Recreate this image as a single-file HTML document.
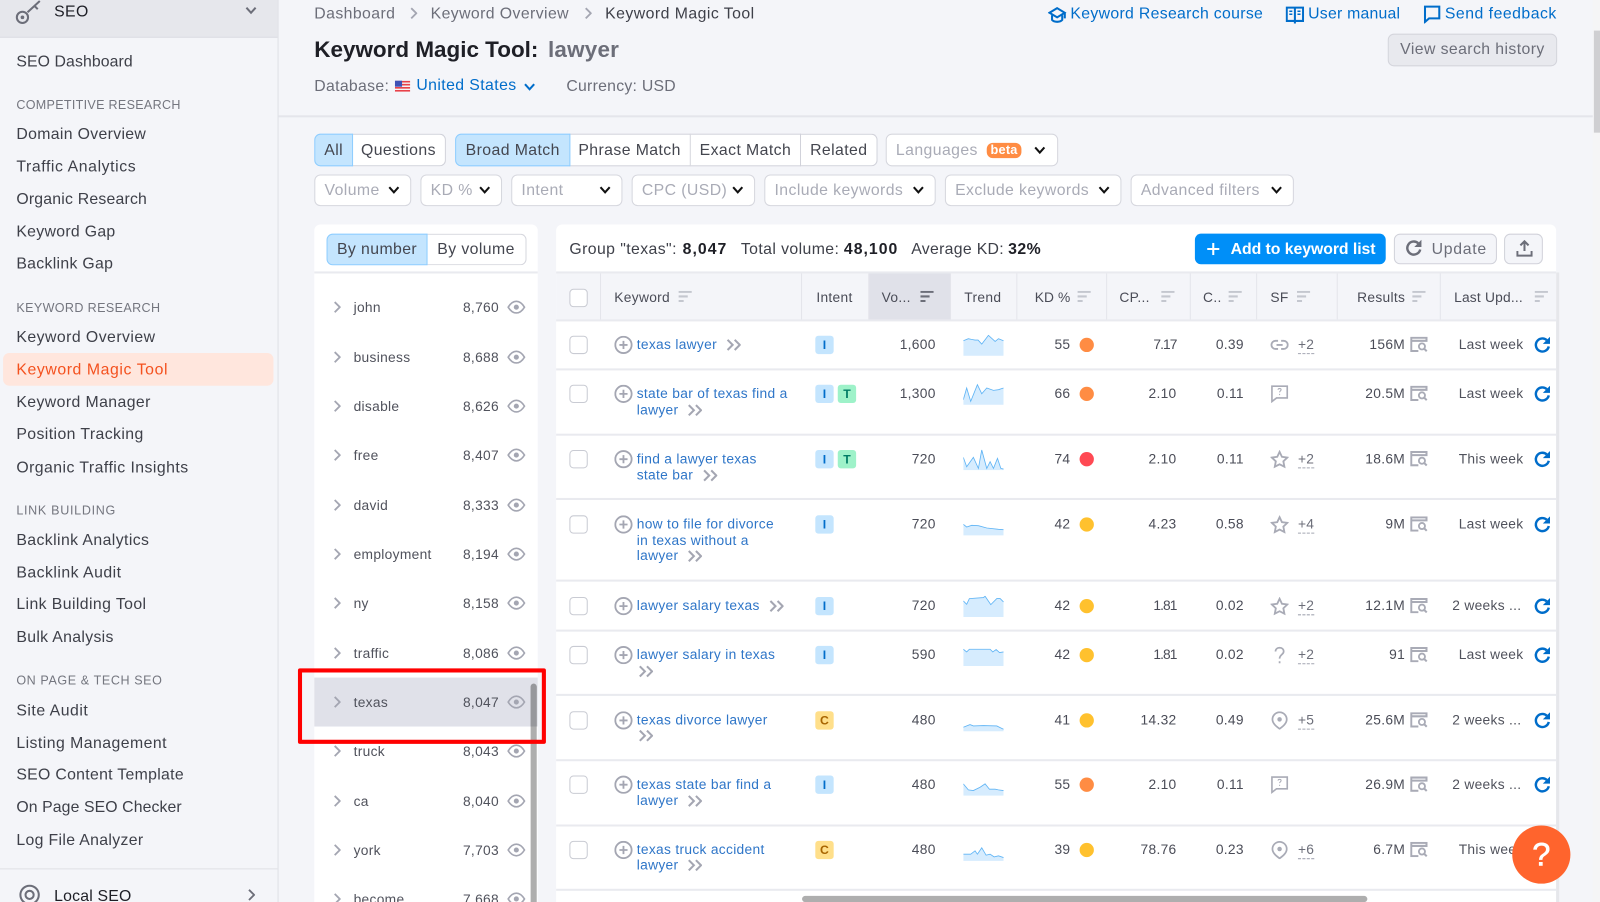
<!DOCTYPE html>
<html><head><meta charset="utf-8"><title>Keyword Magic Tool</title>
<style>
html,body{margin:0;padding:0;width:1600px;height:902px;overflow:hidden;background:#f4f5f9}
#w{position:absolute;left:0;top:0;width:1568px;height:884px;overflow:hidden;transform:scale(1.020408);transform-origin:0 0;font-family:"Liberation Sans",sans-serif;font-size:15.5px;letter-spacing:.4px;color:#44464f;background:#f4f5f9;filter:blur(.3px)}
#w div,#w svg{position:absolute}
#w svg.i{position:static;display:inline-block}
.t{white-space:nowrap;transform:translateY(-50%);line-height:18px}
.s{left:16px;color:#3e4049}
.h{left:16px;font-size:12.3px;letter-spacing:.3px;color:#74767f}
.b{color:#006dca}
.g{color:#6c6e79}
.seg{top:131px;height:30px;background:#fff;border:1px solid #d1d2da;line-height:32px;text-align:center;color:#44464f;box-sizing:content-box}
.on{background:#c4e5fe;border-color:#8ecdff;z-index:2}
.f{top:171px;height:29px;background:#fff;border:1px solid #d6d7de;border-radius:6px;line-height:30px;color:#a9abb6;padding-left:9px;box-sizing:content-box}
.f svg{right:10px;top:10px;width:12px;height:9px;color:#111}
.lr{left:308px;width:219px;height:0;font-size:13.5px;letter-spacing:.3px;color:#50525c}
.lr .c{left:19px;top:-6px;width:7px;height:12px;color:#a4a6b2}
.lr .l{left:38.500px;top:1px}
.lr .n{right:38px;top:1px}
.lr .e{left:189px;top:-7px;width:18px;height:14px;color:#a4a6b2}
.hd{top:292px;font-size:13.5px;letter-spacing:.3px;color:#4a4c57}
.so{top:285px;width:13px;height:11px;color:#c4c7cf}
.vl{top:268px;width:1px;height:46px;background:#e4e5eb}
.hl{left:545px;width:980px;height:2px;background:#e9eaef}
.r{left:545px;width:980px;height:0;font-size:13.5px;letter-spacing:.3px;color:#4a4c57}
.ck{left:13px;top:-9px;width:16px;height:16px;border:1px solid #c9cbd3;border-radius:4px;background:#fff}
.pl{left:57px;top:-9px;width:18px;height:18px;color:#a4a6b2}
.kw{left:79px;top:-8px;line-height:15.6px;color:#2f76c8;white-space:nowrap}
.dc{width:14px;height:12px;margin-left:9.500px;vertical-align:-2px;color:#a4a6b2}
.bd{top:-9px;width:18px;height:18px;border-radius:3px;font-size:12px;font-weight:bold;letter-spacing:0;line-height:18px;text-align:center}
.I{left:254px;background:#c4e5fe;color:#006dca}
.T{left:276px;background:#9ef2c9;color:#007c65}
.C{left:254px;background:#ffdf8a;color:#a86400}
.vol{right:608px}
.tr{left:399px;top:-10px;width:39.5px;height:21px}
.kd{right:476px}
.dot{left:513px;top:-7px;width:14px;height:14px;border-radius:50%}
.o{background:#ff8c43}.y{background:#ffc12e}.d{background:#ff4953}
.cpc{right:372px}
.com{right:306px}
.sf{left:700px;top:-9px;width:18px;height:18px;color:#a9abb6}
.mo{left:727px;border-bottom:1px dashed #a4a6b2;line-height:15px;color:#6c6e79;padding-bottom:1px;transform:translateY(-47%)}
.res{right:148px}
.ri{left:837px;top:-8px;width:17px;height:15px;color:#a9abb6}
.up{right:32px;color:#50525c}
.u2{right:34px}
.rf{left:958px;top:-8px;width:17px;height:17px;color:#006dca}
.nr{letter-spacing:-.9px}
</style></head><body>
<svg width="0" height="0" style="position:absolute">
<symbol id="ch" viewBox="0 0 12 9"><path d="M1.500 1.500L6 6.500l4.500-5" fill="none" stroke="currentColor" stroke-width="2"/></symbol>
<symbol id="cr" viewBox="0 0 7 12"><path d="M1 1l5 5-5 5" fill="none" stroke="currentColor" stroke-width="1.800"/></symbol>
<symbol id="eye" viewBox="0 0 18 14"><path d="M1 7c2.500-4 5-5.700 8-5.700S14.500 3 17 7c-2.500 4-5 5.700-8 5.700S3.500 11 1 7z" fill="none" stroke="currentColor" stroke-width="1.600"/><circle cx="9" cy="7" r="2.500" fill="currentColor"/></symbol>
<symbol id="sort" viewBox="0 0 13 11"><path d="M0 1h13M0 5.500h9M0 10h5" stroke="currentColor" stroke-width="2" fill="none"/></symbol>
<symbol id="dc" viewBox="0 0 14 12"><path d="M1 1l5 5-5 5M8 1l5 5-5 5" fill="none" stroke="currentColor" stroke-width="2"/></symbol>
<symbol id="pl" viewBox="0 0 18 18"><circle cx="9" cy="9" r="8" fill="none" stroke="currentColor" stroke-width="1.800"/><path d="M9 5v8M5 9h8" stroke="currentColor" stroke-width="1.800"/></symbol>
<symbol id="lk" viewBox="0 0 18 18"><path d="M7.500 5H5a4 4 0 0 0 0 8h2.500M10.500 5H13a4 4 0 0 1 0 8h-2.500M6 9h6" fill="none" stroke="currentColor" stroke-width="1.800"/></symbol>
<symbol id="cq" viewBox="0 0 18 18"><path d="M1.500 1.500h15v11.500H6L1.500 16.500z" fill="none" stroke="currentColor" stroke-width="1.600"/><path d="M7.500 5c0-1.600 3-1.600 3 0 0 1-1.500 1.200-1.500 2.500M9 9v1.200" fill="none" stroke="currentColor" stroke-width="1"/></symbol>
<symbol id="st" viewBox="0 0 18 18"><path d="M9 1.800l2.300 4.900 5.300.7-3.900 3.700 1 5.300L9 14l-4.700 2.400 1-5.300-3.900-3.700 5.300-.7z" fill="none" stroke="currentColor" stroke-width="1.800"/></symbol>
<symbol id="pn" viewBox="0 0 18 18"><path d="M9 1a7 7 0 0 0-7 7c0 4 4 7 7 9.200 3-2.200 7-5.200 7-9.200a7 7 0 0 0-7-7z" fill="none" stroke="currentColor" stroke-width="1.700"/><circle cx="9" cy="8" r="2.200" fill="currentColor"/></symbol>
<symbol id="qm" viewBox="0 0 18 18"><path d="M5 5.500c0-5 8-5 8 0 0 3-4 3-4 7M9 15v2" fill="none" stroke="currentColor" stroke-width="1.700"/></symbol>
<symbol id="rs" viewBox="0 0 17 15"><path d="M1 4h15V1H1v13h7" fill="none" stroke="currentColor" stroke-width="2"/><circle cx="11.500" cy="9.500" r="3" fill="none" stroke="currentColor" stroke-width="1.800"/><path d="M13.700 11.700l2.500 2.500" stroke="currentColor" stroke-width="2"/></symbol>
<symbol id="rf" viewBox="0 0 17 17"><path d="M14.800 9.500a6.400 6.400 0 1 1-2-6.200" fill="none" stroke="currentColor" stroke-width="2.400"/><path d="M16 0v7H9z" fill="currentColor"/></symbol>
</svg>
<div id="w">

<!-- sidebar -->
<div style="left:0;top:0;width:272px;height:884px;background:#f4f5f9;border-right:1px solid #dfe0e6"></div>
<div style="left:0;top:0;width:272px;height:36px;background:#e6e7ec;border-bottom:1px solid #dcdde3"></div>
<svg style="left:15px;top:0;width:28px;height:24px" viewBox="0 0 28 24"><circle cx="7" cy="17" r="5.500" fill="none" stroke="#6c6e79" stroke-width="2"/><circle cx="7" cy="17" r="1.800" fill="#6c6e79"/><path d="M12 12L24 1M19 6l3 3" fill="none" stroke="#6c6e79" stroke-width="2"/></svg>
<div class="t" style="left:53px;top:12px;color:#1e1f26">SEO</div>
<svg style="left:240px;top:6px;width:12px;height:9px;color:#6c6e79"><use href="#ch"/></svg>
<div class="t s" style="top:61px;letter-spacing:.1px">SEO Dashboard</div>
<div class="t h" style="top:103px">COMPETITIVE RESEARCH</div>
<div class="t s" style="top:132px;letter-spacing:.33px">Domain Overview</div>
<div class="t s" style="top:164px;letter-spacing:.58px">Traffic Analytics</div>
<div class="t s" style="top:196px;letter-spacing:.2px">Organic Research</div>
<div class="t s" style="top:228px;letter-spacing:.3px">Keyword Gap</div>
<div class="t s" style="top:259px;letter-spacing:.3px">Backlink Gap</div>
<div class="t h" style="top:302px;letter-spacing:.37px">KEYWORD RESEARCH</div>
<div class="t s" style="top:331px;letter-spacing:.45px">Keyword Overview</div>
<div style="left:3px;top:346px;width:265px;height:32px;background:#ffe6dd;border-radius:6px"></div>
<div class="t s" style="top:363px;color:#f4511e;letter-spacing:.57px">Keyword Magic Tool</div>
<div class="t s" style="top:395px">Keyword Manager</div>
<div class="t s" style="top:426px">Position Tracking</div>
<div class="t s" style="top:459px;letter-spacing:.44px">Organic Traffic Insights</div>
<div class="t h" style="top:500px;letter-spacing:.68px">LINK BUILDING</div>
<div class="t s" style="top:530px">Backlink Analytics</div>
<div class="t s" style="top:562px;letter-spacing:.47px">Backlink Audit</div>
<div class="t s" style="top:593px">Link Building Tool</div>
<div class="t s" style="top:625px;letter-spacing:.32px">Bulk Analysis</div>
<div class="t h" style="top:667px;letter-spacing:.58px">ON PAGE &amp; TECH SEO</div>
<div class="t s" style="top:697px;letter-spacing:.5px">Site Audit</div>
<div class="t s" style="top:729px;letter-spacing:.45px">Listing Management</div>
<div class="t s" style="top:760px;letter-spacing:.3px">SEO Content Template</div>
<div class="t s" style="top:792px;letter-spacing:.1px">On Page SEO Checker</div>
<div class="t s" style="top:824px;letter-spacing:.34px">Log File Analyzer</div>
<div style="left:0;top:851px;width:272px;height:1px;background:#dfe0e6"></div>
<svg style="left:18px;top:866px;width:22px;height:22px" viewBox="0 0 22 22"><circle cx="11" cy="11" r="9" fill="none" stroke="#6c6e79" stroke-width="2"/><circle cx="11" cy="11" r="4" fill="none" stroke="#6c6e79" stroke-width="2"/></svg>
<div class="t" style="left:53px;top:879px;color:#1e1f26;letter-spacing:.2px">Local SEO</div>
<svg style="left:243px;top:871px;width:7px;height:12px;color:#6c6e79"><use href="#cr"/></svg>

<!-- header -->
<div class="t g" style="left:308px;top:14px">Dashboard</div>
<svg style="left:402px;top:7px;width:7px;height:12px;color:#a4a6b2"><use href="#cr"/></svg>
<div class="t g" style="left:422px;top:14px">Keyword Overview</div>
<svg style="left:573px;top:7px;width:7px;height:12px;color:#a4a6b2"><use href="#cr"/></svg>
<div class="t" style="left:593px;top:14px;color:#3e4049;letter-spacing:.45px">Keyword Magic Tool</div>
<div class="t" style="left:308px;top:49px;font-size:22px;font-weight:bold;letter-spacing:0;color:#1e1f26;line-height:26px">Keyword Magic Tool:</div>
<div class="t g" style="left:537px;top:49px;font-size:22px;font-weight:bold;letter-spacing:.2px;line-height:26px">lawyer</div>
<div class="t g" style="left:308px;top:85px;letter-spacing:.3px">Database:</div>
<svg style="left:387px;top:79px;width:15px;height:11px" viewBox="0 0 15 11"><rect width="15" height="11" fill="#f5f5f5"/><path d="M0 1h15M0 4h15M0 7h15M0 10h15" stroke="#e8424a" stroke-width="1.600"/><rect width="7" height="6" fill="#3f51b5"/></svg>
<div class="t b" style="left:408px;top:84px">United States</div>
<svg style="left:513px;top:81px;width:12px;height:9px;color:#006dca"><use href="#ch"/></svg>
<div class="t g" style="left:555px;top:85px;letter-spacing:.25px">Currency: USD</div>

<svg style="left:1027px;top:6px;width:18px;height:18px;color:#006dca" viewBox="0 0 18 18"><path d="M9 2L1.500 6.500 9 11l7.500-4.500zM4 9v4.500c2 2.500 8 2.500 10 0V9M16.500 6.500V12" fill="none" stroke="currentColor" stroke-width="2"/></svg>
<div class="t b" style="left:1049px;top:14px;letter-spacing:.31px">Keyword Research course</div>
<svg style="left:1260px;top:6px;width:18px;height:18px;color:#006dca" viewBox="0 0 18 18"><path d="M1 1.500h16v13H1zM9 1.500V17" fill="none" stroke="currentColor" stroke-width="2"/><path d="M3.500 5h3M3.500 8h3M11.500 5h3M11.500 8h3" stroke="currentColor" stroke-width="1.500"/></svg>
<div class="t b" style="left:1282px;top:14px;letter-spacing:.22px">User manual</div>
<svg style="left:1395px;top:5px;width:17px;height:18px;color:#006dca" viewBox="0 0 17 18"><path d="M1.500 1.500h14v11.500H5.500l-4 3.500z" fill="none" stroke="currentColor" stroke-width="2"/></svg>
<div class="t b" style="left:1416px;top:14px;letter-spacing:.48px">Send feedback</div>
<div style="left:1360px;top:33px;width:164px;height:30px;background:#e8e9ee;border:1px solid #d4d5dc;border-radius:6px;line-height:29px;text-align:center;color:#6c6e79">View search history</div>

<div style="left:273px;top:113px;width:1288px;height:2px;background:#e4e5eb"></div>
<div style="left:1561px;top:0;width:7px;height:884px;background:#f5f5f6"></div>
<div style="left:1562px;top:30px;width:6px;height:100px;background:#cfcfd2"></div>

<!-- tabs -->
<div class="seg on" style="left:308px;width:36px;border-radius:6px 0 0 6px">All</div>
<div class="seg" style="left:345px;width:91px;border-left:0;border-radius:0 6px 6px 0">Questions</div>
<div class="seg on" style="left:446px;width:111px;border-radius:6px 0 0 6px">Broad Match</div>
<div class="seg" style="left:558px;width:118px;border-left:0">Phrase Match</div>
<div class="seg" style="left:677px;width:107px;border-left:0">Exact Match</div>
<div class="seg" style="left:785px;width:74px;border-left:0;border-radius:0 6px 6px 0">Related</div>
<div class="f" style="left:868px;top:131px;height:30px;width:158px;line-height:31px">Languages<svg style="right:11px;top:11px"><use href="#ch"/></svg></div>
<div style="left:967px;top:140px;width:34px;height:15px;background:#ff8c43;border-radius:6px;color:#fff;font-size:12.5px;font-weight:bold;letter-spacing:.2px;line-height:15px;text-align:center">beta</div>

<div class="f" style="left:308px;width:84px">Volume<svg><use href="#ch"/></svg></div>
<div class="f" style="left:412px;width:69px">KD %<svg><use href="#ch"/></svg></div>
<div class="f" style="left:501px;width:98px">Intent<svg><use href="#ch"/></svg></div>
<div class="f" style="left:619px;width:110px">CPC (USD)<svg><use href="#ch"/></svg></div>
<div class="f" style="left:749px;width:157px">Include keywords<svg><use href="#ch"/></svg></div>
<div class="f" style="left:926px;width:162px">Exclude keywords<svg><use href="#ch"/></svg></div>
<div class="f" style="left:1108px;width:149px">Advanced filters<svg><use href="#ch"/></svg></div>

<!-- left panel -->
<div style="left:308px;top:220px;width:219px;height:664px;background:#fff;border-radius:6px 6px 0 0"></div>
<div style="left:320px;top:229px;width:97px;height:29px;background:#c4e5fe;border:1px solid #8ecdff;border-radius:6px 0 0 6px;line-height:30px;text-align:center;z-index:2">By number</div>
<div style="left:418px;top:229px;width:97px;height:29px;background:#fff;border:1px solid #d6d7de;border-left:0;border-radius:0 6px 6px 0;line-height:30px;text-align:center">By volume</div>
<div style="left:308px;top:266px;width:219px;height:2px;background:#e9eaef"></div>

<div style="left:308px;top:664px;width:219px;height:48px;background:#e0e1e9"></div>
<div style="left:520px;top:670px;width:6px;height:214px;background:#aeaeae;border-radius:3px 3px 0 0"></div>
<div style="left:520px;top:670px;width:6px;height:42px;background:#97989c;border-radius:3px 3px 0 0"></div>

<div class="lr" style="top:301px"><svg class="c"><use href="#cr"/></svg><div class="t l">john</div><div class="t n">8,760</div><svg class="e"><use href="#eye"/></svg></div>
<div class="lr" style="top:349.500px"><svg class="c"><use href="#cr"/></svg><div class="t l">business</div><div class="t n">8,688</div><svg class="e"><use href="#eye"/></svg></div>
<div class="lr" style="top:398px"><svg class="c"><use href="#cr"/></svg><div class="t l">disable</div><div class="t n">8,626</div><svg class="e"><use href="#eye"/></svg></div>
<div class="lr" style="top:446px"><svg class="c"><use href="#cr"/></svg><div class="t l">free</div><div class="t n">8,407</div><svg class="e"><use href="#eye"/></svg></div>
<div class="lr" style="top:494.500px"><svg class="c"><use href="#cr"/></svg><div class="t l">david</div><div class="t n">8,333</div><svg class="e"><use href="#eye"/></svg></div>
<div class="lr" style="top:543px"><svg class="c"><use href="#cr"/></svg><div class="t l">employment</div><div class="t n">8,194</div><svg class="e"><use href="#eye"/></svg></div>
<div class="lr" style="top:591px"><svg class="c"><use href="#cr"/></svg><div class="t l">ny</div><div class="t n">8,158</div><svg class="e"><use href="#eye"/></svg></div>
<div class="lr" style="top:639.500px"><svg class="c"><use href="#cr"/></svg><div class="t l">traffic</div><div class="t n">8,086</div><svg class="e"><use href="#eye"/></svg></div>
<div class="lr" style="top:688px"><svg class="c"><use href="#cr"/></svg><div class="t l">texas</div><div class="t n">8,047</div><svg class="e"><use href="#eye"/></svg></div>
<div class="lr" style="top:736px"><svg class="c"><use href="#cr"/></svg><div class="t l">truck</div><div class="t n">8,043</div><svg class="e"><use href="#eye"/></svg></div>
<div class="lr" style="top:784.500px"><svg class="c"><use href="#cr"/></svg><div class="t l">ca</div><div class="t n">8,040</div><svg class="e"><use href="#eye"/></svg></div>
<div class="lr" style="top:832.500px"><svg class="c"><use href="#cr"/></svg><div class="t l">york</div><div class="t n">7,703</div><svg class="e"><use href="#eye"/></svg></div>
<div class="lr" style="top:880.500px"><svg class="c"><use href="#cr"/></svg><div class="t l">become</div><div class="t n">7,668</div><svg class="e"><use href="#eye"/></svg></div>

<div style="left:292px;top:655px;width:235px;height:66px;border:4px solid #f00;border-radius:2px;z-index:5"></div>

<!-- right card -->
<div style="left:545px;top:220px;width:980px;height:664px;background:#fff;border-radius:6px 6px 0 0"></div>
<div style="left:1525px;top:267px;width:3px;height:617px;background:#e6e7eb"></div>
<div class="t" style="left:558px;top:245px;color:#3e4049">Group "texas":</div>
<div class="t" style="left:669px;top:245px;font-weight:bold;color:#1e1f26;letter-spacing:1px">8,047</div>
<div class="t" style="left:726px;top:245px;color:#3e4049">Total volume:</div>
<div class="t" style="left:827px;top:245px;font-weight:bold;color:#1e1f26;letter-spacing:1px">48,100</div>
<div class="t" style="left:893px;top:245px;color:#3e4049;letter-spacing:.3px">Average KD:</div>
<div class="t" style="left:988px;top:245px;font-weight:bold;color:#1e1f26">32%</div>

<div style="left:1171px;top:229px;width:187px;height:30px;background:#008ff8;border-radius:6px"></div>
<svg style="left:1183px;top:238px;width:12px;height:12px" viewBox="0 0 12 12"><path d="M6 0v12M0 6h12" stroke="#fff" stroke-width="2"/></svg>
<div class="t" style="left:1206px;top:245px;color:#fff;font-weight:bold;letter-spacing:-.05px">Add to keyword list</div>
<div style="left:1366px;top:229px;width:99px;height:28px;background:#f4f5f9;border:1px solid #d1d2da;border-radius:6px"></div>
<svg style="left:1377px;top:235px;width:17px;height:17px;color:#6c6e79"><use href="#rf"/></svg>
<div class="t g" style="left:1403px;top:245px;letter-spacing:.7px">Update</div>
<div style="left:1474px;top:229px;width:36px;height:28px;background:#f4f5f9;border:1px solid #d1d2da;border-radius:6px"></div>
<svg style="left:1486px;top:235px;width:16px;height:17px" viewBox="0 0 16 17"><path d="M8 11V2M4 5.500L8 1.500l4 4M1 11v4.500h14V11" fill="none" stroke="#6c6e79" stroke-width="2"/></svg>

<!-- table head -->
<div style="left:545px;top:267px;width:980px;height:47px;background:#f4f5f9"></div>
<div style="left:545px;top:266px;width:980px;height:2px;background:#e9eaef"></div>
<div style="left:851px;top:268px;width:80px;height:46px;background:#e0e1e9"></div>
<div class="vl" style="left:588px"></div><div class="vl" style="left:785px"></div><div class="vl" style="left:851px"></div><div class="vl" style="left:931px"></div><div class="vl" style="left:996px"></div><div class="vl" style="left:1084px"></div><div class="vl" style="left:1166px"></div><div class="vl" style="left:1231px"></div><div class="vl" style="left:1310px"></div><div class="vl" style="left:1411px"></div>
<div style="left:558px;top:283px;width:16px;height:16px;border:1px solid #c9cbd3;border-radius:4px;background:#fff"></div>
<div class="t hd" style="left:602px">Keyword</div><svg class="so" style="left:665px"><use href="#sort"/></svg>
<div class="t hd" style="left:800px">Intent</div>
<div class="t hd" style="left:864px">Vo...</div><svg class="so" style="left:902px;color:#6c6e79"><use href="#sort"/></svg>
<div class="t hd" style="left:945px">Trend</div>
<div class="t hd" style="left:1014px;letter-spacing:.1px">KD %</div><svg class="so" style="left:1056px"><use href="#sort"/></svg>
<div class="t hd" style="left:1097px">CP...</div><svg class="so" style="left:1138px"><use href="#sort"/></svg>
<div class="t hd" style="left:1179px">C..</div><svg class="so" style="left:1204px"><use href="#sort"/></svg>
<div class="t hd" style="left:1245px">SF</div><svg class="so" style="left:1271px"><use href="#sort"/></svg>
<div class="t hd" style="left:1330px">Results</div><svg class="so" style="left:1384px"><use href="#sort"/></svg>
<div class="t hd" style="left:1425px;letter-spacing:.2px">Last Upd...</div><svg class="so" style="left:1504px"><use href="#sort"/></svg>

<div class="hl" style="top:313px"></div><div class="hl" style="top:361px"></div><div class="hl" style="top:424.500px"></div><div class="hl" style="top:488px"></div><div class="hl" style="top:568px"></div><div class="hl" style="top:616.500px"></div><div class="hl" style="top:680px"></div><div class="hl" style="top:744px"></div><div class="hl" style="top:807.500px"></div><div class="hl" style="top:871px"></div>

<!-- rows -->
<div class="r" style="top:338px"><div class="ck"></div><svg class="pl"><use href="#pl"/></svg><div class="kw">texas lawyer<svg class="i dc"><use href="#dc"/></svg></div><div class="bd I">I</div><div class="t vol">1,600</div>
<svg class="tr" viewBox="0 0 120 64"><path d="M0 18L15 12 24 14 35 16 44 16 55 28 75 2 95 20 105 12 120 18V63H0z" fill="#d6ecfe"/><path d="M0 18L15 12 24 14 35 16 44 16 55 28 75 2 95 20 105 12 120 18" fill="none" stroke="#5fb4f5" stroke-width="2.500"/></svg>
<div class="t kd">55</div><div class="dot o"></div><div class="t cpc nr">7.17</div><div class="t com">0.39</div><svg class="sf"><use href="#lk"/></svg><div class="t mo">+2</div><div class="t res">156M</div><svg class="ri"><use href="#rs"/></svg><div class="t up">Last week</div><svg class="rf"><use href="#rf"/></svg></div>

<div class="r" style="top:386px"><div class="ck"></div><svg class="pl"><use href="#pl"/></svg><div class="kw">state bar of texas find a<br>lawyer<svg class="i dc"><use href="#dc"/></svg></div><div class="bd I">I</div><div class="bd T">T</div><div class="t vol">1,300</div>
<svg class="tr" viewBox="0 0 120 64"><path d="M0 48L10 13 22 53 42 3 55 30 70 13 90 20 105 18 120 13V63H0z" fill="#d6ecfe"/><path d="M0 48L10 13 22 53 42 3 55 30 70 13 90 20 105 18 120 13" fill="none" stroke="#5fb4f5" stroke-width="2.500"/></svg>
<div class="t kd">66</div><div class="dot o"></div><div class="t cpc">2.10</div><div class="t com">0.11</div><svg class="sf"><use href="#cq"/></svg><div class="t res">20.5M</div><svg class="ri"><use href="#rs"/></svg><div class="t up">Last week</div><svg class="rf"><use href="#rf"/></svg></div>

<div class="r" style="top:450px"><div class="ck"></div><svg class="pl"><use href="#pl"/></svg><div class="kw">find a lawyer texas<br>state bar<svg class="i dc"><use href="#dc"/></svg></div><div class="bd I">I</div><div class="bd T">T</div><div class="t vol">720</div>
<svg class="tr" viewBox="0 0 120 64"><path d="M0 25L10 53 30 25 45 58 55 3 70 58 80 38 90 58 102 28 112 58 120 60V63H0z" fill="#d6ecfe"/><path d="M0 25L10 53 30 25 45 58 55 3 70 58 80 38 90 58 102 28 112 58 120 60" fill="none" stroke="#5fb4f5" stroke-width="2.500"/></svg>
<div class="t kd">74</div><div class="dot d"></div><div class="t cpc">2.10</div><div class="t com">0.11</div><svg class="sf"><use href="#st"/></svg><div class="t mo">+2</div><div class="t res">18.6M</div><svg class="ri"><use href="#rs"/></svg><div class="t up">This week</div><svg class="rf"><use href="#rf"/></svg></div>

<div class="r" style="top:514px"><div class="ck"></div><svg class="pl"><use href="#pl"/></svg><div class="kw">how to file for divorce<br>in texas without a<br>lawyer<svg class="i dc"><use href="#dc"/></svg></div><div class="bd I">I</div><div class="t vol">720</div>
<svg class="tr" viewBox="0 0 120 64"><path d="M0 30L10 38 25 33 45 34 70 41 105 45 120 46V63H0z" fill="#d6ecfe"/><path d="M0 30L10 38 25 33 45 34 70 41 105 45 120 46" fill="none" stroke="#5fb4f5" stroke-width="2.500"/></svg>
<div class="t kd">42</div><div class="dot y"></div><div class="t cpc">4.23</div><div class="t com">0.58</div><svg class="sf"><use href="#st"/></svg><div class="t mo">+4</div><div class="t res">9M</div><svg class="ri"><use href="#rs"/></svg><div class="t up">Last week</div><svg class="rf"><use href="#rf"/></svg></div>

<div class="r" style="top:593.500px"><div class="ck"></div><svg class="pl"><use href="#pl"/></svg><div class="kw">lawyer salary texas<svg class="i dc"><use href="#dc"/></svg></div><div class="bd I">I</div><div class="t vol">720</div>
<svg class="tr" viewBox="0 0 120 64"><path d="M0 15L10 25 18 8 60 5 65 1 82 26 100 8 110 8 120 18V63H0z" fill="#d6ecfe"/><path d="M0 15L10 25 18 8 60 5 65 1 82 26 100 8 110 8 120 18" fill="none" stroke="#5fb4f5" stroke-width="2.500"/></svg>
<div class="t kd">42</div><div class="dot y"></div><div class="t cpc nr">1.81</div><div class="t com">0.02</div><svg class="sf"><use href="#st"/></svg><div class="t mo">+2</div><div class="t res">12.1M</div><svg class="ri"><use href="#rs"/></svg><div class="t up u2">2 weeks ...</div><svg class="rf"><use href="#rf"/></svg></div>

<div class="r" style="top:642px"><div class="ck"></div><svg class="pl"><use href="#pl"/></svg><div class="kw">lawyer salary in texas<br><svg class="i dc" style="margin-left:2px"><use href="#dc"/></svg></div><div class="bd I">I</div><div class="t vol">590</div>
<svg class="tr" viewBox="0 0 120 64"><path d="M0 13L10 21 18 13 80 13 88 21 98 14 108 23 120 21V63H0z" fill="#d6ecfe"/><path d="M0 13L10 21 18 13 80 13 88 21 98 14 108 23 120 21" fill="none" stroke="#5fb4f5" stroke-width="2.500"/></svg>
<div class="t kd">42</div><div class="dot y"></div><div class="t cpc nr">1.81</div><div class="t com">0.02</div><svg class="sf"><use href="#qm"/></svg><div class="t mo">+2</div><div class="t res">91</div><svg class="ri"><use href="#rs"/></svg><div class="t up">Last week</div><svg class="rf"><use href="#rf"/></svg></div>

<div class="r" style="top:705.500px"><div class="ck"></div><svg class="pl"><use href="#pl"/></svg><div class="kw">texas divorce lawyer<br><svg class="i dc" style="margin-left:2px"><use href="#dc"/></svg></div><div class="bd C">C</div><div class="t vol">480</div>
<svg class="tr" viewBox="0 0 120 64"><path d="M0 51L20 43 30 47 60 46 100 47 110 52 120 57V63H0z" fill="#d6ecfe"/><path d="M0 51L20 43 30 47 60 46 100 47 110 52 120 57" fill="none" stroke="#5fb4f5" stroke-width="2.500"/></svg>
<div class="t kd">41</div><div class="dot y"></div><div class="t cpc">14.32</div><div class="t com">0.49</div><svg class="sf"><use href="#pn"/></svg><div class="t mo">+5</div><div class="t res">25.6M</div><svg class="ri"><use href="#rs"/></svg><div class="t up u2">2 weeks ...</div><svg class="rf"><use href="#rf"/></svg></div>

<div class="r" style="top:769px"><div class="ck"></div><svg class="pl"><use href="#pl"/></svg><div class="kw">texas state bar find a<br>lawyer<svg class="i dc"><use href="#dc"/></svg></div><div class="bd I">I</div><div class="t vol">480</div>
<svg class="tr" viewBox="0 0 120 64"><path d="M0 28L15 46 30 48 50 38 65 28 78 44 95 44 105 46 120 48V63H0z" fill="#d6ecfe"/><path d="M0 28L15 46 30 48 50 38 65 28 78 44 95 44 105 46 120 48" fill="none" stroke="#5fb4f5" stroke-width="2.500"/></svg>
<div class="t kd">55</div><div class="dot o"></div><div class="t cpc">2.10</div><div class="t com">0.11</div><svg class="sf"><use href="#cq"/></svg><div class="t res">26.9M</div><svg class="ri"><use href="#rs"/></svg><div class="t up u2">2 weeks ...</div><svg class="rf"><use href="#rf"/></svg></div>

<div class="r" style="top:832.500px"><div class="ck"></div><svg class="pl"><use href="#pl"/></svg><div class="kw">texas truck accident<br>lawyer<svg class="i dc"><use href="#dc"/></svg></div><div class="bd C">C</div><div class="t vol">480</div>
<svg class="tr" viewBox="0 0 120 64"><path d="M0 43L22 43 35 33 42 43 55 24 68 46 80 43 92 51 105 48 120 53V63H0z" fill="#d6ecfe"/><path d="M0 43L22 43 35 33 42 43 55 24 68 46 80 43 92 51 105 48 120 53" fill="none" stroke="#5fb4f5" stroke-width="2.500"/></svg>
<div class="t kd">39</div><div class="dot y"></div><div class="t cpc">78.76</div><div class="t com">0.23</div><svg class="sf"><use href="#pn"/></svg><div class="t mo">+6</div><div class="t res">6.7M</div><svg class="ri"><use href="#rs"/></svg><div class="t up">This week</div><svg class="rf"><use href="#rf"/></svg></div>

<div style="left:786px;top:878px;width:554px;height:6px;background:#aeaeae;border-radius:3px"></div>

<!-- help -->
<div style="left:1482px;top:809px;width:57px;height:57px;border-radius:50%;background:#ff642d;color:#fff;font-size:32px;letter-spacing:0;line-height:57px;text-align:center;z-index:6;-webkit-text-stroke:.6px #fff">?</div>
</div>
</body></html>
